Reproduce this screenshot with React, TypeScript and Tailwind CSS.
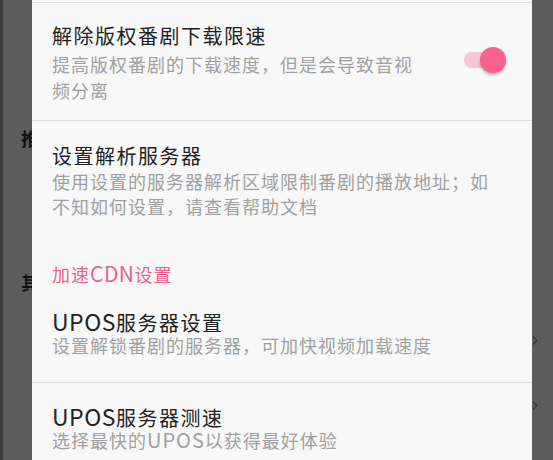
import React from 'react'

function Chevron() {
  return (
    <svg width="6" height="9" viewBox="0 0 6 9" className="text-[#363636]">
      <polyline points="1,0.5 5,4.5 1,8.5" fill="none" stroke="currentColor" strokeWidth="1.2" />
    </svg>
  )
}

function Switch() {
  return (
    <div className="mt-[24px] flex shrink-0 items-center self-start">
      <div className="h-4 w-[37px] rounded-full bg-[#f8c5d6]" />
      <div className="-ml-[21px] h-[26px] w-[26px] rounded-full bg-[#fa5f8d] shadow-[0_2px_3px_rgba(0,0,0,0.28)]" />
    </div>
  )
}

export default function App() {
  return (
    <div className="relative h-[460px] w-[553px] overflow-hidden bg-[#5c5c5c] font-['Noto_Sans_CJK_SC','Noto_Sans',sans-serif]">
      {/* settings page behind the dim */}
      <div className="flex h-full">
        <div className="w-[3px] bg-[#3c3c3c]" />
        <div className="flex flex-1 flex-col pl-[18px] pr-[15px]">
          <div className="mt-[126px] text-[18px] font-bold leading-[24px] text-[#141414]">推荐设置</div>
          <div className="mt-[120px] text-[18px] font-bold leading-[24px] text-[#141414]">其他设置</div>
          <div className="mt-[42px] flex justify-end">
            <Chevron />
          </div>
          <div className="mt-[56px] flex justify-end">
            <Chevron />
          </div>
        </div>
      </div>

      {/* dialog */}
      <div className="absolute left-[32px] top-0 h-full w-[500px] bg-[#f8f8f9]">
        <div className="pt-[2px]">
          <div className="h-px bg-[#dddddd]" />
        </div>

        <div className="flex pb-[17px] pl-[20px] pr-[26px] pt-[20px]">
          <div className="flex-1">
            <div className="text-[20px] leading-[26px] tracking-[1.5px] text-[#222222]">解除版权番剧下载限速</div>
            <div className="mt-[3px] w-[372px] text-[18px] leading-[25.5px] tracking-[1px] text-[#a0a0a0]">
              提高版权番剧的下载速度，但是会导致音视频分离
            </div>
          </div>
          <Switch />
        </div>
        <div className="h-px bg-[#dddddd]" />

        <div className="pl-[20px] pr-[26px] pt-[22px]">
          <div className="text-[20px] leading-[26px] tracking-[1.5px] text-[#222222]">设置解析服务器</div>
          <div className="text-[18px] leading-[25px] tracking-[1px] text-[#a0a0a0]">
            使用设置的服务器解析区域限制番剧的播放地址；如不知如何设置，请查看帮助文档
          </div>
        </div>

        <div className="pl-[20px] pt-[43px] text-[18px] leading-[24px] tracking-[1px] text-[#ee5f91]">
          加速<span className="text-[21px] leading-[0] tracking-[0.5px]">CDN</span>设置
        </div>

        <div className="pb-[26px] pl-[20px] pr-[26px] pt-[26px]">
          <div className="text-[20px] leading-[22px] tracking-[1.5px] text-[#222222]">
            <span className="text-[23px] leading-[0] tracking-[0.5px]">UPOS</span>服务器设置
          </div>
          <div className="text-[18px] leading-[22px] tracking-[1px] text-[#a0a0a0]">
            设置解锁番剧的服务器，可加快视频加载速度
          </div>
        </div>
        <div className="h-px bg-[#dddddd]" />

        <div className="pl-[20px] pr-[26px] pt-[24px]">
          <div className="text-[20px] leading-[22px] tracking-[1.5px] text-[#222222]">
            <span className="text-[23px] leading-[0] tracking-[0.5px]">UPOS</span>服务器测速
          </div>
          <div className="text-[18px] leading-[22px] tracking-[1px] text-[#a0a0a0]">
            选择最快的<span className="text-[20px] leading-[0]">UPOS</span>以获得最好体验
          </div>
        </div>
      </div>
    </div>
  )
}
